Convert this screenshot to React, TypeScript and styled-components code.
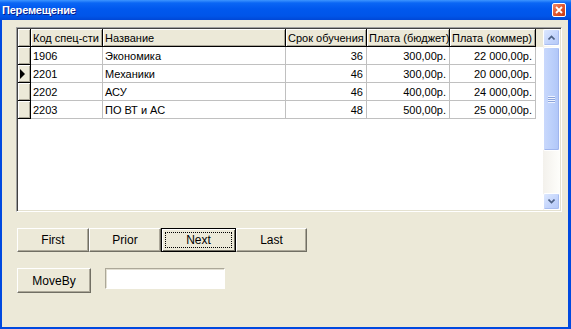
import styled, { createGlobalStyle } from 'styled-components'

const GlobalStyle = createGlobalStyle`
  html, body {
    margin: 0;
    padding: 0;
    background: #ece9d8;
  }
  body {
    font-family: "Liberation Sans", Arial, sans-serif;
    font-size: 11px;
    color: #000;
  }
`;

const Window = styled.div`
  width: 571px;
  height: 329px;
  box-sizing: border-box;
  display: flex;
  flex-direction: column;
  background: #ece9d8;
  border-left: 2px solid #0049e0;
  border-right: 3px solid #0049e0;
  border-bottom: 2px solid #0049e0;
`;

const TitleBar = styled.div`
  height: 20px;
  margin: 0 -3px 0 -2px;
  display: flex;
  align-items: center;
  justify-content: space-between;
  padding: 0 3px 0 2px;
  background: linear-gradient(to bottom, #3d95ff 0%, #0a66f5 15%, #0058ee 45%, #0055e9 80%, #0047d6 100%);
  color: #fff;
  font-weight: bold;
  font-size: 11px;
  letter-spacing: -0.2px;
  text-shadow: 1px 1px 0 #0a1e8a;
`;

const CloseButton = styled.div`
  width: 12px;
  height: 12px;
  margin-right: 2px;
  border: 1px solid #fff;
  border-radius: 2px;
  background: linear-gradient(135deg, #f08a6a 0%, #e2572f 50%, #c63a14 100%);
  display: flex;
  align-items: center;
  justify-content: center;
`;

const Body = styled.div`
  flex: 1;
  display: flex;
  flex-direction: column;
  padding: 7px 6px 0 14px;
`;

const GridFrame = styled.div`
  height: 185px;
  box-sizing: border-box;
  display: flex;
  border-top: 1px solid #a0a0a0;
  border-left: 1px solid #a0a0a0;
  border-right: 1px solid #fff;
  border-bottom: 1px solid #fff;
  box-shadow: inset 1px 1px 0 #404040, inset -1px -1px 0 #e4e1d0;
  padding: 1px;
`;

const DataArea = styled.div`
  flex: 1;
  background: #fff;
  display: flex;
  flex-direction: column;
`;

const COLS = '13px 72px 183px 81px 83px 86px 1fr';

const HeaderRow = styled.div`
  display: grid;
  grid-template-columns: ${COLS};
  height: 18px;
  background: #ece9d8;
`;

const HeaderCell = styled.div<{ $align?: string }>`
  box-sizing: border-box;
  border-right: 1px solid #000;
  border-bottom: 1px solid #000;
  box-shadow: inset 1px 1px 0 #fff, inset -1px -1px 0 #aca899;
  padding: 0 2px;
  display: flex;
  align-items: center;
  justify-content: ${({ $align }) => $align || 'flex-start'};
  white-space: nowrap;
  overflow: hidden;
`;

const HeaderFill = styled.div`
  background: #ece9d8;
`;

const Row = styled.div`
  display: grid;
  grid-template-columns: ${COLS};
  height: 18px;
`;

const Indicator = styled.div`
  box-sizing: border-box;
  background: #ece9d8;
  border-right: 1px solid #000;
  border-bottom: 1px solid #000;
  box-shadow: inset 1px 1px 0 #fff, inset -1px -1px 0 #aca899;
  display: flex;
  align-items: center;
  padding-left: 2px;
`;

const Cell = styled.div<{ $right?: boolean }>`
  box-sizing: border-box;
  border-right: 1px solid #c0c0c0;
  border-bottom: 1px solid #c0c0c0;
  padding: 0 3px 0 2px;
  display: flex;
  align-items: center;
  justify-content: ${({ $right }) => ($right ? 'flex-end' : 'flex-start')};
  white-space: nowrap;
  overflow: hidden;
`;

const Blank = styled.div``;

const ScrollBar = styled.div`
  width: 17px;
  display: flex;
  flex-direction: column;
  background: linear-gradient(to right, #f3f1ec, #fefefb);
`;

const ArrowButton = styled.div`
  height: 17px;
  box-sizing: border-box;
  border: 1px solid #fff;
  border-radius: 2px;
  background: linear-gradient(135deg, #dde8fe 0%, #c2d3fc 60%, #b4c8f6 100%);
  box-shadow: inset -1px -1px 0 #a8bdf0;
  display: flex;
  align-items: center;
  justify-content: center;
`;

const Track = styled.div`
  flex: 1;
  display: flex;
  flex-direction: column;
  padding-top: 1px;
`;

const Thumb = styled.div`
  height: 104px;
  box-sizing: border-box;
  border: 1px solid #fff;
  border-radius: 2px;
  background: linear-gradient(to right, #c9d8fc 0%, #bcd0fb 50%, #b0c6f8 100%);
  box-shadow: inset -1px -1px 0 #9fb5ee;
  display: flex;
  align-items: center;
  justify-content: center;
`;

const Grip = styled.div`
  width: 7px;
  height: 7px;
  background: repeating-linear-gradient(to bottom, #eef3ff 0 1px, #8ca4dc 1px 2px);
`;

const ButtonRow = styled.div`
  display: flex;
  margin-top: 16px;
  margin-left: 1px;
`;

const Button = styled.div<{ $width: number; $focused?: boolean }>`
  width: ${({ $width }) => $width}px;
  height: 24px;
  box-sizing: border-box;
  background: #ece9d8;
  border-top: 1px solid #fff;
  border-left: 1px solid #fff;
  border-right: 1px solid #716f64;
  border-bottom: 1px solid #716f64;
  box-shadow: inset -1px -1px 0 #aca899;
  display: flex;
  align-items: center;
  justify-content: center;
  font-size: 12px;
  position: relative;
  ${({ $focused }) =>
    $focused &&
    `
    border: 1px solid #000;
    box-shadow: inset 1px 1px 0 #fff, inset -1px -1px 0 #716f64;
    &::after {
      content: '';
      position: absolute;
      inset: 3px;
      border: 1px dotted #000;
    }
  `}
`;

const MoveRow = styled.div`
  display: flex;
  align-items: flex-start;
  gap: 14px;
  margin-top: 16px;
  margin-left: 1px;
`;

const Edit = styled.div`
  width: 120px;
  height: 21px;
  box-sizing: border-box;
  background: #fff;
  border-top: 1px solid #aca899;
  border-left: 1px solid #aca899;
  border-right: 1px solid #fff;
  border-bottom: 1px solid #fff;
  box-shadow: inset 1px 1px 0 #e2dfd2;
`;

const rows = [
  { code: '1906', name: 'Экономика', term: 36, budget: '300,00р.', comm: '22 000,00р.' },
  { code: '2201', name: 'Механики', term: 46, budget: '300,00р.', comm: '20 000,00р.' },
  { code: '2202', name: 'АСУ', term: 46, budget: '400,00р.', comm: '24 000,00р.' },
  { code: '2203', name: 'ПО ВТ и АС', term: 48, budget: '500,00р.', comm: '25 000,00р.' },
];

const current = 1;

const Chevron = ({ up }: { up?: boolean }) => (
  <svg width="7" height="5" viewBox="0 0 7 5">
    <path
      d={up ? 'M0.5 4.5 L3.5 1.5 L6.5 4.5' : 'M0.5 0.5 L3.5 3.5 L6.5 0.5'}
      fill="none"
      stroke="#4d6185"
      strokeWidth="1.6"
    />
  </svg>
);

export default function App() {
  return (
    <>
      <GlobalStyle />
      <Window>
        <TitleBar>
          <span>Перемещение</span>
          <CloseButton>
            <svg width="8" height="8" viewBox="0 0 8 8">
              <path d="M1 1 L7 7 M7 1 L1 7" stroke="#fff" strokeWidth="1.8" />
            </svg>
          </CloseButton>
        </TitleBar>
        <Body>
          <GridFrame>
            <DataArea>
              <HeaderRow>
                <HeaderCell />
                <HeaderCell>Код спец-сти</HeaderCell>
                <HeaderCell>Название</HeaderCell>
                <HeaderCell>Срок обучения</HeaderCell>
                <HeaderCell>Плата (бюджет)</HeaderCell>
                <HeaderCell>Плата (коммер)</HeaderCell>
                <HeaderFill />
              </HeaderRow>
              {rows.map((r, i) => (
                <Row key={r.code}>
                  <Indicator>
                    {i === current && (
                      <svg width="6" height="10" viewBox="0 0 6 10">
                        <path d="M0 0 L5 5 L0 10 Z" fill="#000" />
                      </svg>
                    )}
                  </Indicator>
                  <Cell>{r.code}</Cell>
                  <Cell>{r.name}</Cell>
                  <Cell $right>{r.term}</Cell>
                  <Cell $right>{r.budget}</Cell>
                  <Cell $right>{r.comm}</Cell>
                  <Blank />
                </Row>
              ))}
            </DataArea>
            <ScrollBar>
              <ArrowButton>
                <Chevron up />
              </ArrowButton>
              <Track>
                <Thumb>
                  <Grip />
                </Thumb>
              </Track>
              <ArrowButton>
                <Chevron />
              </ArrowButton>
            </ScrollBar>
          </GridFrame>
          <ButtonRow>
            <Button $width={72}>First</Button>
            <Button $width={72}>Prior</Button>
            <Button $width={75} $focused>Next</Button>
            <Button $width={71}>Last</Button>
          </ButtonRow>
          <MoveRow>
            <Button $width={74} style={{ height: 25 }}>MoveBy</Button>
            <Edit />
          </MoveRow>
        </Body>
      </Window>
    </>
  );
}
